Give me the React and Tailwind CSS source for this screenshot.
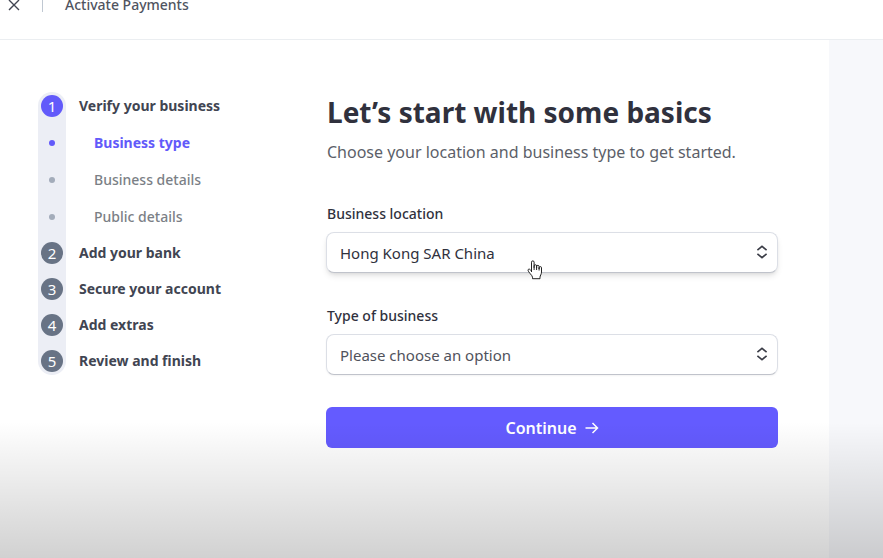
import React from 'react';

const steps = [
    { number: 1, label: 'Verify your business', active: true },
    { label: 'Business type', active: true },
    { label: 'Business details' },
    { label: 'Public details' },
    { number: 2, label: 'Add your bank' },
    { number: 3, label: 'Secure your account' },
    { number: 4, label: 'Add extras' },
    { number: 5, label: 'Review and finish' },
];

const MainStep = ({ step }) => (
    <li className="flex items-center h-9">
        <span className="flex w-7 justify-center">
            <span
                className={`flex size-[22px] items-center justify-center rounded-full text-[15px] text-white ${
                    step.active ? 'bg-[#625afa]' : 'bg-[#687385]'
                }`}
            >
                {step.number}
            </span>
        </span>
        <a href="#" className="ml-[13px] text-sm font-bold text-[#414552]">
            {step.label}
        </a>
    </li>
);

const SubStep = ({ step }) => (
    <li className="flex items-center h-[37px]">
        <span className="flex w-7 justify-center">
            <span className={`size-1.5 rounded-full ${step.active ? 'bg-[#625afa]' : 'bg-[#a3acba]'}`} />
        </span>
        <a
            href="#"
            className={`ml-7 text-sm ${
                step.active ? 'font-bold text-[#625afa]' : 'font-medium text-[#7b7f86]'
            }`}
        >
            {step.label}
        </a>
    </li>
);

const SelectField = ({ id, label, options, className }) => (
    <div>
        <label htmlFor={id} className="block pl-px text-sm leading-[22px] font-medium text-[#30313d]">
            {label}
        </label>
        <div className="relative mt-[7px]">
            <select
                id={id}
                className={`block h-[41px] w-full appearance-none rounded-lg border border-[#dcdfe6] border-b-[#c0c3cb] bg-white px-[13px] pt-px text-[15px] ${className}`}
            >
                {options.map((option) => (
                    <option key={option}>{option}</option>
                ))}
            </select>
            <svg
                className="pointer-events-none absolute top-3 right-2.5 h-4 w-3"
                viewBox="0 0 12 16"
                fill="none"
                stroke="#3b3d47"
                strokeWidth="1.6"
            >
                <path d="M1.400 6.200 6 2.400l4.600 3.800M1.400 9.800 6 13.600l4.600-3.800" />
            </svg>
        </div>
    </div>
);

const HandCursor = () => (
    <svg
        className="pointer-events-none absolute top-[27px] left-[201px] h-5 w-4"
        viewBox="0 0 16 20"
        fill="#fff"
        stroke="#222"
        strokeWidth="1"
        strokeLinejoin="round"
    >
        <path d="M4.500 12V2.200a1.300 1.300 0 0 1 2.600 0V7.500V6a1.200 1.200 0 0 1 2.500 0v2-1.400a1.200 1.200 0 0 1 2.500 0V9 7.800a1.200 1.200 0 0 1 2.400 0V12c0 2.500-1.500 3.500-1.500 5.200v1.500H5.500v-1.500C5.500 15.500 1 12 1 10.200c0-1.200 1.500-1.500 2.300-.5L4.500 11" />
        <path d="M7.100 7v3M9.600 7.500V10M12.100 8.500v2" />
    </svg>
);

const App = () => {
    return (
        <div className="relative flex min-h-screen flex-col overflow-hidden bg-white font-['Noto_Sans','Open_Sans',sans-serif]">
            <header className="-mt-[29px] flex h-[69px] shrink-0 items-center border-b border-[#ebeef1] pl-2">
                <button type="button" aria-label="Close">
                    <svg className="size-3" viewBox="0 0 12 12" stroke="#414552" strokeWidth="1.4">
                        <path d="m1 1 10 10M11 1 1 11" />
                    </svg>
                </button>
                <span className="ml-[22px] h-[14px] w-px bg-[#c0c8d2]" />
                <span className="ml-[22px] text-sm font-medium text-[#50545f]">Activate Payments</span>
            </header>

            <div className="flex flex-1">
                <main className="flex flex-1 pt-12 pr-[51px] pl-[38px]">
                    <nav className="grid w-[288px] shrink-0 self-start">
                        <div className="col-start-1 row-start-1 my-1 w-7 rounded-full bg-[#eceef5]" />
                        <ol className="col-start-1 row-start-1">
                            {steps.map((step) =>
                                step.number ? (
                                    <MainStep key={step.label} step={step} />
                                ) : (
                                    <SubStep key={step.label} step={step} />
                                )
                            )}
                        </ol>
                    </nav>

                    <form className="flex-1" onSubmit={(e) => e.preventDefault()}>
                        <h1 className="mt-1 pl-px text-[28px] leading-10 font-bold text-[#30313d]">
                            Let’s start with some basics
                        </h1>
                        <p className="mt-2 pl-px text-base leading-6 text-[#5c5f69]">
                            Choose your location and business type to get started.
                        </p>
                        <div className="mt-[39px] flex flex-col gap-8">
                            <div className="relative">
                                <SelectField
                                    id="location"
                                    label="Business location"
                                    options={['Hong Kong SAR China']}
                                    className="text-[#30313d] shadow-md"
                                />
                                <div className="pointer-events-none absolute inset-x-0 bottom-0 h-10">
                                    <HandCursor />
                                </div>
                            </div>
                            <SelectField
                                id="business-type"
                                label="Type of business"
                                options={['Please choose an option']}
                                className="text-[#50525c] shadow-xs"
                            />
                            <button
                                type="submit"
                                className="flex h-[41px] items-center justify-center gap-2 rounded-md bg-[#645bff] pt-px text-base font-semibold text-white"
                            >
                                Continue
                                <svg className="h-3 w-3.5" viewBox="0 0 14 12" fill="none" stroke="#fff" strokeWidth="1.500">
                                    <path d="M.5 6H12.500M7.500 1l5 5-5 5" />
                                </svg>
                            </button>
                        </div>
                    </form>
                </main>
                <aside className="w-[54px] shrink-0 bg-[#f7f8fb]" />
            </div>

            <div className="pointer-events-none absolute inset-x-0 bottom-0 h-[136px] bg-linear-to-b from-black/0 to-black/18" />
        </div>
    );
};

export default App;
